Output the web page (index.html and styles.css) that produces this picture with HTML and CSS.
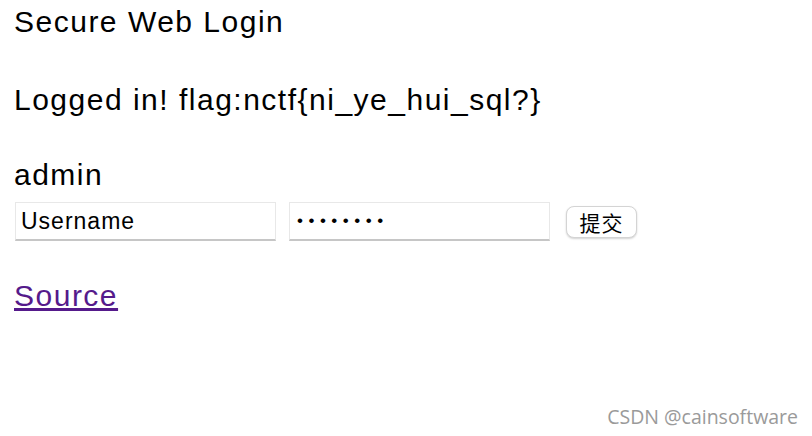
FILE: index.html
```html
<!DOCTYPE html>
<html lang="en">

<head>
    <meta charset="utf-8">
    <title>Secure Web Login</title>
    <link rel="stylesheet" href="styles.css">
</head>

<body>
    <div class="title">Secure Web Login</div>
    <p class="msg">Logged in! flag:nctf{ni_ye_hui_sql?}</p>
    <div class="user">admin</div>
    <form class="login" onsubmit="return false;">
        <input class="field" type="text" name="user" value="Username">
        <input class="field pass" type="password" name="pass" value="password">
        <input class="btn" type="submit" value="提交">
    </form>
    <p class="source"><a href="#">Source</a></p>

    <div class="mark">CSDN @cainsoftware</div>
</body>

</html>
```

FILE: styles.css
```css
body {
    margin: 0 14px;
    font-family: "Liberation Sans", Arial, sans-serif;
    font-size: 30px;
    line-height: 34px;
    letter-spacing: 1.5px;
    color: #000;
    background: #fff;
}

.title {
    margin-top: 5px;
}

.msg {
    margin: 44px 0 0 0;
}

.user {
    margin-top: 41px;
}

.login {
    display: flex;
    align-items: center;
    margin-top: 10px;
}

.field {
    box-sizing: border-box;
    width: 261px;
    height: 39px;
    margin: 0 13px 0 1px;
    padding: 0 5px;
    border: 1px solid #e8e8e8;
    border-bottom: 2px solid #c6c6c6;
    font-family: "Liberation Sans", Arial, sans-serif;
    font-size: 23px;
    letter-spacing: 1px;
    color: #000;
    outline: none;
}

.field + .field {
    margin-left: 0;
    margin-right: 16px;
}

.pass {
    padding-left: 7px;
    font-size: 17px;
    letter-spacing: 5.5px;
}

.btn {
    box-sizing: border-box;
    width: 71px;
    height: 32px;
    padding: 0;
    border: 1px solid #d4d4d4;
    border-radius: 8px;
    background: #fff;
    box-shadow: 0 1px 2px rgba(0, 0, 0, 0.18);
    font-family: "Noto Sans CJK SC", sans-serif;
    font-size: 21px;
    letter-spacing: 1px;
    color: #000;
}

.source {
    margin: 38px 0 0 0;
}

.source a {
    color: #551a8b;
}

.mark {
    position: absolute;
    right: 14px;
    bottom: 8px;
    font-family: "Open Sans", sans-serif;
    font-size: 19.5px;
    line-height: 22px;
    letter-spacing: 0;
    color: #9a9a9a;
}
```
